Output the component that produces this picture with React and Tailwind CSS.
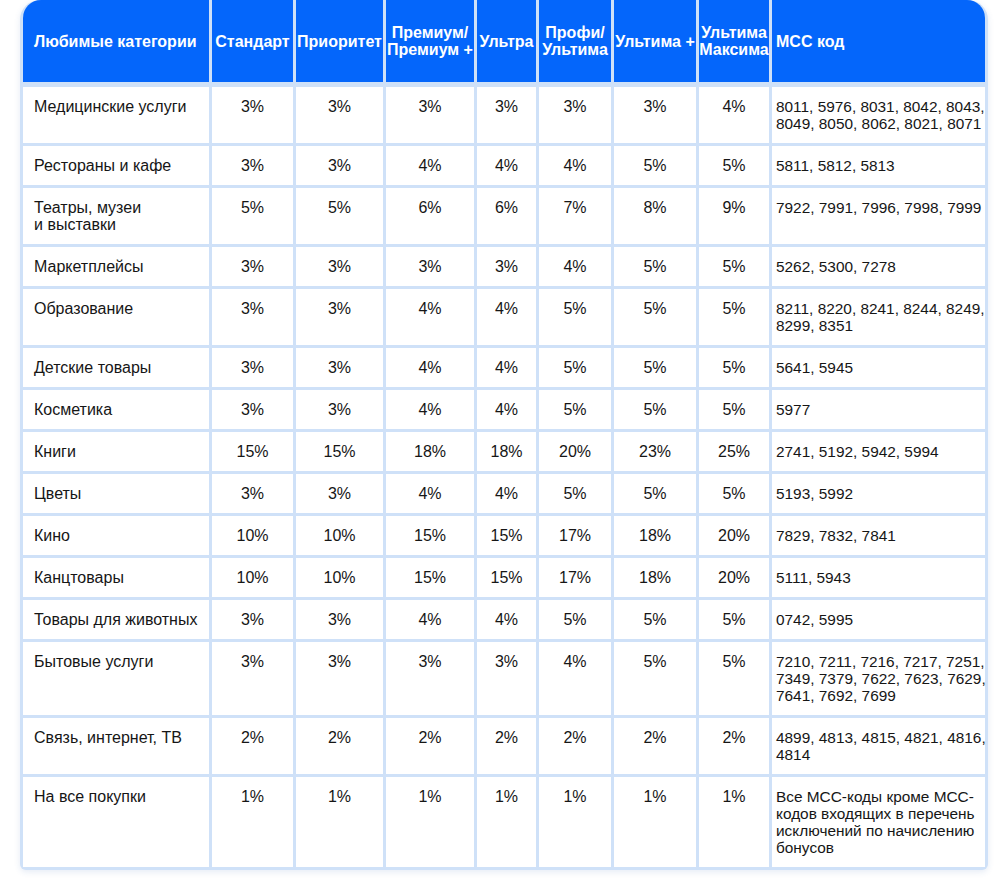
const columns = [
  ["Любимые категории"],
  ["Стандарт"],
  ["Приоритет"],
  ["Премиум/", "Премиум +"],
  ["Ультра"],
  ["Профи/", "Ультима"],
  ["Ультима +"],
  ["Ультима", "Максима"],
  ["МСС код"],
];

const rows = [
  [["Медицинские услуги"], [3, 3, 3, 3, 3, 3, 4], ["8011, 5976, 8031, 8042, 8043,", "8049, 8050, 8062, 8021, 8071"]],
  [["Рестораны и кафе"], [3, 3, 4, 4, 4, 5, 5], ["5811, 5812, 5813"]],
  [["Театры, музеи", "и выставки"], [5, 5, 6, 6, 7, 8, 9], ["7922, 7991, 7996, 7998, 7999"]],
  [["Маркетплейсы"], [3, 3, 3, 3, 4, 5, 5], ["5262, 5300, 7278"]],
  [["Образование"], [3, 3, 4, 4, 5, 5, 5], ["8211, 8220, 8241, 8244, 8249,", "8299, 8351"]],
  [["Детские товары"], [3, 3, 4, 4, 5, 5, 5], ["5641, 5945"]],
  [["Косметика"], [3, 3, 4, 4, 5, 5, 5], ["5977"]],
  [["Книги"], [15, 15, 18, 18, 20, 23, 25], ["2741, 5192, 5942, 5994"]],
  [["Цветы"], [3, 3, 4, 4, 5, 5, 5], ["5193, 5992"]],
  [["Кино"], [10, 10, 15, 15, 17, 18, 20], ["7829, 7832, 7841"]],
  [["Канцтовары"], [10, 10, 15, 15, 17, 18, 20], ["5111, 5943"]],
  [["Товары для животных"], [3, 3, 4, 4, 5, 5, 5], ["0742, 5995"]],
  [["Бытовые услуги"], [3, 3, 3, 3, 4, 5, 5], ["7210, 7211, 7216, 7217, 7251,", "7349, 7379, 7622, 7623, 7629,", "7641, 7692, 7699"]],
  [["Связь, интернет, ТВ"], [2, 2, 2, 2, 2, 2, 2], ["4899, 4813, 4815, 4821, 4816,", "4814"]],
  [["На все покупки"], [1, 1, 1, 1, 1, 1, 1], ["Все МСС-коды кроме МСС-", "кодов входящих в перечень", "исключений по начислению", "бонусов"]],
];

function Lines({ lines }) {
  return lines.map((l, i) => (
    <span key={i} className="block whitespace-nowrap">
      {l}
    </span>
  ));
}

export default function App() {
  return (
    <div className="min-h-screen bg-white pl-[20px] font-['Liberation_Sans',Arial,sans-serif]">
      <div className="w-[968px] rounded-t-[20px] rounded-b-[6px] bg-[#cfe1f8] px-[3px] pb-[3px] shadow-[0_2px_6px_rgba(40,90,170,0.12)]">
        <div className="grid grid-cols-[186px_81px_87px_88px_59px_72px_82px_70px_213px] gap-[3px]">
          {/* Header */}
          {columns.map((c, i) => (
            <div
              key={i}
              className={
                "mb-[2px] flex h-[82px] items-center bg-[#0466fb] text-[16px] font-bold leading-[17px] text-white " +
                (i === 0
                  ? "rounded-tl-[18px] pl-[11px]"
                  : i === 8
                  ? "rounded-tr-[18px] pl-[4px]"
                  : "justify-center text-center")
              }
            >
              <div>
                <Lines lines={c} />
              </div>
            </div>
          ))}

          {/* Body */}
          {rows.map(([name, vals, mcc], r) => (
            <Row key={r} name={name} vals={vals} mcc={mcc} />
          ))}
        </div>
      </div>
    </div>
  );
}

function Row({ name, vals, mcc }) {
  const cell = "bg-white pt-[11px] pb-[11px] leading-[17px] text-[#161616]";
  return (
    <>
      <div className={cell + " pl-[11px] text-[16px]"}>
        <Lines lines={name} />
      </div>
      {vals.map((v, i) => (
        <div key={i} className={cell + " text-center text-[16px]"}>
          {v}%
        </div>
      ))}
      <div className={cell + " pl-[4px] text-[15.4px]"}>
        <Lines lines={mcc} />
      </div>
    </>
  );
}
